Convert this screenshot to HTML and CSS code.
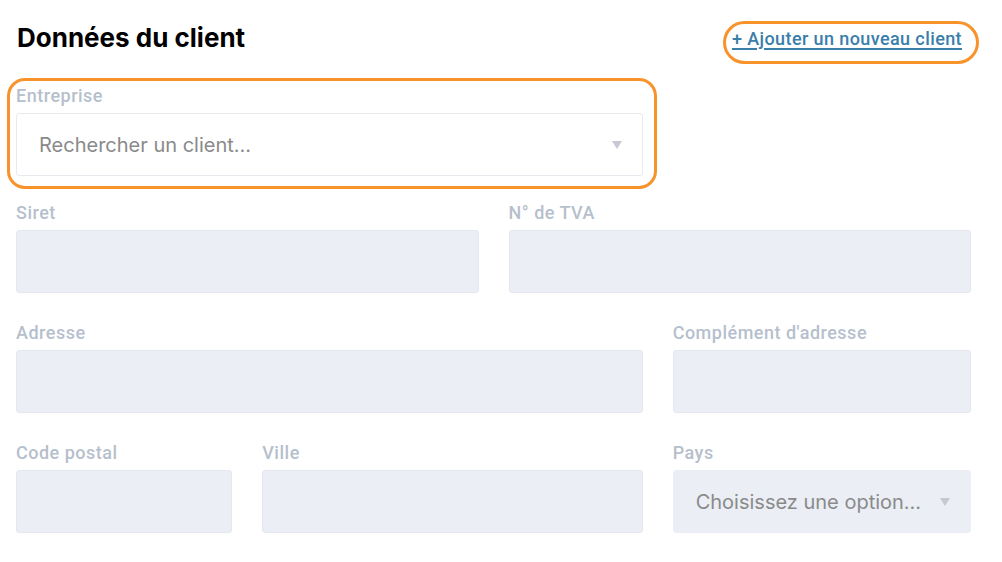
FILE: index.html
```html
<!DOCTYPE html>
<html lang="fr">
<head>
  <meta charset="UTF-8">
  <meta name="viewport" content="width=device-width, initial-scale=1.0">
  <title>Données du client</title>
  <link rel="stylesheet" href="styles.css">
</head>
<body>

<div class="client-form">

  <!-- en-tête -->
  <div class="form-head">
    <h2 class="form-title">Données du client</h2>
    <a href="#" class="add-link mark mark-pill">+ Ajouter un nouveau client</a>
  </div>

  <div class="form-grid">
    <div class="field span-8 first-row mark mark-box">
      <label class="field-label">Entreprise</label>
      <div class="select select-white">
        <span class="select-text">Rechercher un client...</span>
        <span class="caret"></span>
      </div>
    </div>
    <div class="span-4 first-row"></div>

    <div class="field span-6">
      <label class="field-label">Siret</label>
      <div class="input"></div>
    </div>
    <div class="field span-6">
      <label class="field-label">N° de TVA</label>
      <div class="input"></div>
    </div>

    <div class="field span-8">
      <label class="field-label">Adresse</label>
      <div class="input"></div>
    </div>
    <div class="field span-4">
      <label class="field-label">Complément d'adresse</label>
      <div class="input"></div>
    </div>

    <div class="field span-3">
      <label class="field-label">Code postal</label>
      <div class="input"></div>
    </div>
    <div class="field span-5">
      <label class="field-label">Ville</label>
      <div class="input"></div>
    </div>
    <div class="field span-4">
      <label class="field-label">Pays</label>
      <div class="select select-grey">
        <span class="select-text">Choisissez une option...</span>
        <span class="caret"></span>
      </div>
    </div>
  </div>

</div>

</body>
</html>
```

FILE: styles.css
```css
html,body{
  margin: 0;
  background-color: #fff;
}

.client-form{
  padding: 20px 31px 0 16px;
  font-family: Roboto, "Liberation Sans", sans-serif;
}

.form-head{
  display: flex;
  justify-content: space-between;
  align-items: flex-start;
  margin-bottom: 29px;
}
.form-title{
  margin: 0;
  padding-left: 1px;
  font-family: Inter, sans-serif;
  font-size: 26px;
  font-weight: 700;
  line-height: 36px;
  color: #000;
}
.add-link{
  margin-top: 8px;
  margin-right: 9px;
  font-size: 18px;
  font-weight: 500;
  line-height: 22px;
  letter-spacing: 0.4px;
  color: #3a7eaa;
  text-decoration: underline;
  text-decoration-thickness: 2px;
  text-underline-offset: 3px;
}

/* cadres orange d'annotation */
.mark{
  position: relative;
}
.mark::before{
  content: "";
  position: absolute;
  border: 3px solid #f8922b;
  pointer-events: none;
}
.mark-pill::before{
  top: -7px;
  bottom: -14px;
  left: -9px;
  right: -17px;
  border-radius: 24px;
}
.mark-box::before{
  top: -7px;
  bottom: -13px;
  left: -9px;
  right: -14px;
  border-radius: 18px;
}

.form-grid{
  display: grid;
  grid-template-columns: repeat(12, 1fr);
  column-gap: 30px;
}
.span-3{ grid-column: span 3; }
.span-4{ grid-column: span 4; }
.span-5{ grid-column: span 5; }
.span-6{ grid-column: span 6; }
.span-8{ grid-column: span 8; }

.field{
  margin-bottom: 29px;
}
.field.first-row{
  margin-bottom: 26px;
}
.field-label{
  display: block;
  margin-bottom: 6px;
  font-size: 18px;
  font-weight: 500;
  line-height: 22px;
  letter-spacing: 0.5px;
  color: #b6bfcd;
}

.input{
  height: 61px;
  background-color: #ebeef5;
  border: 1px solid #e4e7ee;
  border-radius: 3px;
}

.select{
  display: flex;
  align-items: center;
  justify-content: space-between;
  height: 61px;
  padding: 0 22px;
  border: 1px solid #e8eaef;
  border-radius: 3px;
}
.select-white{
  background-color: #fff;
}
.select-grey{
  background-color: #ebeef5;
  border-color: #ebeef5;
}
.select-text{
  font-family: Inter, sans-serif;
  font-size: 20px;
  color: #8a8a8a;
}
.caret{
  width: 0;
  height: 0;
  margin-right: -2px;
  border-left: 5px solid transparent;
  border-right: 5px solid transparent;
  border-top: 8px solid #c6c9d1;
}
```
